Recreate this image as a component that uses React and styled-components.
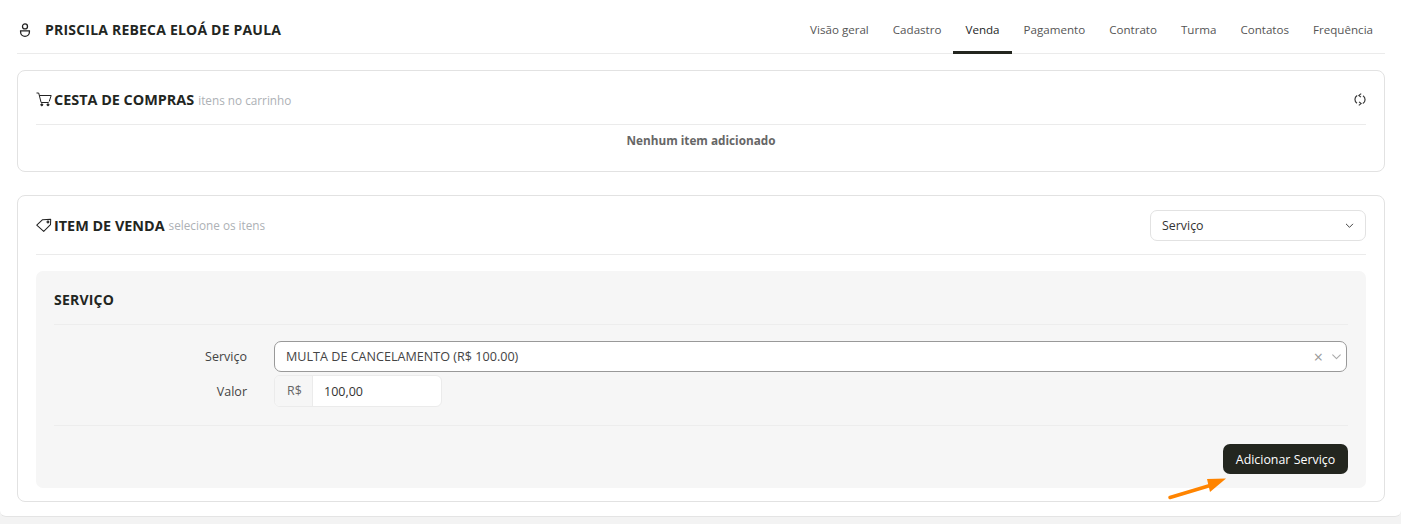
import React from "react";
import styled, { createGlobalStyle } from "styled-components";
import { HiOutlineChevronDown } from "react-icons/hi";

const tabs = ["Visão geral", "Cadastro", "Venda", "Pagamento", "Contrato", "Turma", "Contatos", "Frequência"];

const UserIcon = () => (
  <svg width="12" height="14" viewBox="0 0 12 14" fill="none" stroke="#222" strokeWidth="1.3">
    <circle cx="6" cy="3.4" r="2.5" />
    <path d="M1.6 7.9h8.8v1a4.4 4.4 0 0 1-8.8 0z" />
  </svg>
);

const CartIcon = () => (
  <svg width="16" height="15" viewBox="0 0 16 15" fill="none" stroke="#222" strokeWidth="1">
    <path d="M0.5 1h2.2l2.4 9.5h7.6" />
    <path d="M3.4 3.5h11.8l-2 6" />
    <circle cx="5.8" cy="12.8" r="1" fill="#222" />
    <circle cx="12" cy="12.8" r="1" fill="#222" />
  </svg>
);

const TagIcon = () => (
  <svg width="16" height="15" viewBox="0 0 17 15" fill="none" stroke="#222" strokeWidth="1.1">
    <path d="M0.8 7.2 7 1.3 15.6 0.8 15.4 6.6 8.2 13.8z" strokeLinejoin="round" />
    <circle cx="12.7" cy="3.7" r="1" />
  </svg>
);

const RefreshIcon = () => (
  <svg width="12" height="13" viewBox="0 0 12 13" fill="none" stroke="#3a3a3a" strokeWidth="1.2">
    <path d="M3.2 2.4A4.6 4.6 0 0 0 3 10.2" />
    <path d="M8.8 10.6A4.6 4.6 0 0 0 9 2.8" />
    <path d="M7.2 0.6 4.9 2.4l2 1.7M4.8 12.4l2.3-1.8-2-1.7" />
  </svg>
);

const Arrow = () => (
  <ArrowSvg width="60" height="24" viewBox="0 0 60 24">
    <path d="M2 21.5 42 9.5" stroke="#ff8400" strokeWidth="3.4" strokeLinecap="round" />
    <path d="M58 2.5 39 3 42 16z" fill="#ff8400" />
  </ArrowSvg>
);

const App = () => (
  <Page>
    <GlobalStyle />
    <Shell>
      <TopBar>
        <Person>
          <UserIcon />
          <PersonName>PRISCILA REBECA ELOÁ DE PAULA</PersonName>
        </Person>
        <Tabs>
          {tabs.map((tab) => (
            <Tab key={tab} $active={tab === "Venda"}>
              {tab}
            </Tab>
          ))}
        </Tabs>
      </TopBar>

      <Card>
        <CardHeader>
          <CardTitle>
            <CartIcon />
            <TitleText>CESTA DE COMPRAS</TitleText>
            <TitleHint>itens no carrinho</TitleHint>
          </CardTitle>
          <RefreshIcon />
        </CardHeader>
        <EmptyText>Nenhum item adicionado</EmptyText>
      </Card>

      <SaleCard>
        <SaleHeader>
          <CardTitle>
            <TagIcon />
            <TitleText>ITEM DE VENDA</TitleText>
            <TitleHint>selecione os itens</TitleHint>
          </CardTitle>
          <TypeSelect>
            Serviço
            <HiOutlineChevronDown size={11} color="#333" />
          </TypeSelect>
        </SaleHeader>

        <Panel>
          <PanelTitle>SERVIÇO</PanelTitle>
          <Form>
            <FormRow>
              <FormLabel>Serviço</FormLabel>
              <ServiceSelect>
                <span>MULTA DE CANCELAMENTO (R$ 100.00)</span>
                <SelectActions>
                  <ClearMark>×</ClearMark>
                  <HiOutlineChevronDown size={13} color="#aaa" />
                </SelectActions>
              </ServiceSelect>
            </FormRow>
            <FormRow>
              <FormLabel>Valor</FormLabel>
              <InputGroup>
                <Addon>R$</Addon>
                <InputValue>100,00</InputValue>
              </InputGroup>
            </FormRow>
          </Form>
          <PanelFooter>
            <AddButton>Adicionar Serviço</AddButton>
            <Arrow />
          </PanelFooter>
        </Panel>
      </SaleCard>
    </Shell>
  </Page>
);

const GlobalStyle = createGlobalStyle`
  html, body {
    margin: 0;
    padding: 0;
    background: #f3f3f3;
  }
  * {
    box-sizing: border-box;
  }
`;

const Page = styled.div`
  height: 524px;
  overflow: hidden;
  font-family: "Open Sans", "Liberation Sans", sans-serif;
  font-size: 12px;
  color: #333;
`;

const Shell = styled.div`
  height: 517px;
  padding: 0 16px 0 17px;
  background: #fff;
  border-bottom: 1px solid #e4e4e4;
  border-radius: 0 0 6px 6px;
`;

const TopBar = styled.header`
  display: flex;
  align-items: stretch;
  justify-content: space-between;
  height: 54px;
  padding-top: 6px;
  border-bottom: 1px solid #ebebeb;
`;

const Person = styled.div`
  display: flex;
  align-items: center;
  gap: 14px;
  padding: 0 0 0 2px;
`;

const PersonName = styled.h1`
  margin: 0;
  font-size: 14px;
  font-weight: 700;
  letter-spacing: 0.2px;
  color: #23261f;
`;

const Tabs = styled.nav`
  display: flex;
`;

const Tab = styled.a`
  display: flex;
  align-items: center;
  padding: 1px 12px 0;
  font-size: 11.6px;
  color: ${(p) => (p.$active ? "#23261f" : "#555")};
  border-bottom: 3px solid ${(p) => (p.$active ? "#23261f" : "transparent")};
  margin-bottom: -1px;
`;

const Card = styled.section`
  margin-top: 16px;
  height: 102px;
  padding: 0 18px;
  border: 1px solid #e2e2e2;
  border-radius: 8px;
  background: #fff;
`;

const SaleCard = styled(Card)`
  margin-top: 23px;
  height: 307px;
`;

const CardHeader = styled.div`
  display: flex;
  align-items: center;
  justify-content: space-between;
  height: 54px;
  padding: 4px 0 0;
  border-bottom: 1px solid #ebebeb;
`;

const SaleHeader = styled(CardHeader)`
  height: 59px;
  padding: 0;
`;

const CardTitle = styled.div`
  display: flex;
  align-items: center;
`;

const TitleText = styled.h2`
  margin: 0 4px 0 2px;
  font-size: 14.4px;
  font-weight: 700;
  color: #23261f;
`;

const TitleHint = styled.span`
  font-size: 11.75px;
  color: #adb1b5;
`;

const EmptyText = styled.p`
  margin: 7px 0 0;
  text-align: center;
  font-size: 11.75px;
  font-weight: 700;
  color: #666;
`;

const TypeSelect = styled.div`
  display: flex;
  align-items: center;
  justify-content: space-between;
  width: 216px;
  height: 31px;
  padding: 0 10px 0 11px;
  font-size: 12.4px;
  color: #333;
  border: 1px solid #e2e2e2;
  border-radius: 7px;
  background: #fff;
`;

const Panel = styled.div`
  margin-top: 16px;
  height: 217px;
  padding: 0 18px;
  background: #f6f6f6;
  border-radius: 7px;
`;

const PanelTitle = styled.h3`
  display: flex;
  align-items: center;
  height: 54px;
  margin: 0;
  padding-top: 4px;
  font-size: 14px;
  font-weight: 700;
  letter-spacing: 0.2px;
  color: #23261f;
  border-bottom: 1px solid #ededed;
`;

const Form = styled.div`
  display: flex;
  flex-direction: column;
  gap: 3px;
  height: 101px;
  padding-top: 16px;
  border-bottom: 1px solid #ededed;
`;

const FormRow = styled.div`
  display: flex;
  align-items: center;
  gap: 27px;
`;

const FormLabel = styled.label`
  width: 193px;
  text-align: right;
  font-size: 12.5px;
  color: #444;
`;

const ServiceSelect = styled.div`
  flex: 1;
  display: flex;
  align-items: center;
  justify-content: space-between;
  height: 31px;
  margin-right: 1px;
  padding: 0 3px 0 11px;
  font-size: 12.6px;
  color: #444;
  background: #fff;
  border: 1px solid #999;
  border-radius: 7px;
`;

const SelectActions = styled.div`
  display: flex;
  align-items: center;
  gap: 7px;
`;

const ClearMark = styled.span`
  font-size: 16px;
  line-height: 1;
  color: #999;
`;

const InputGroup = styled.div`
  display: flex;
  width: 168px;
  height: 32px;
  background: #fff;
  border: 1px solid #ebebeb;
  border-radius: 6px;
  overflow: hidden;
`;

const Addon = styled.span`
  display: flex;
  align-items: center;
  width: 38px;
  padding-left: 12px;
  padding-bottom: 2px;
  font-size: 12.4px;
  color: #666;
  background: #f6f6f6;
  border-right: 1px solid #ebebeb;
`;

const InputValue = styled.span`
  display: flex;
  align-items: center;
  padding-left: 11px;
  font-size: 12.5px;
  color: #333;
`;

const PanelFooter = styled.div`
  position: relative;
  display: flex;
  justify-content: flex-end;
  padding-top: 18px;
`;

const AddButton = styled.button`
  width: 125px;
  height: 30px;
  padding: 0;
  font-family: inherit;
  font-size: 12.4px;
  color: #fff;
  background: #23261f;
  border: 0;
  border-radius: 7px;
`;

const ArrowSvg = styled.svg`
  position: absolute;
  right: 120px;
  top: 50px;
`;

export default App;
